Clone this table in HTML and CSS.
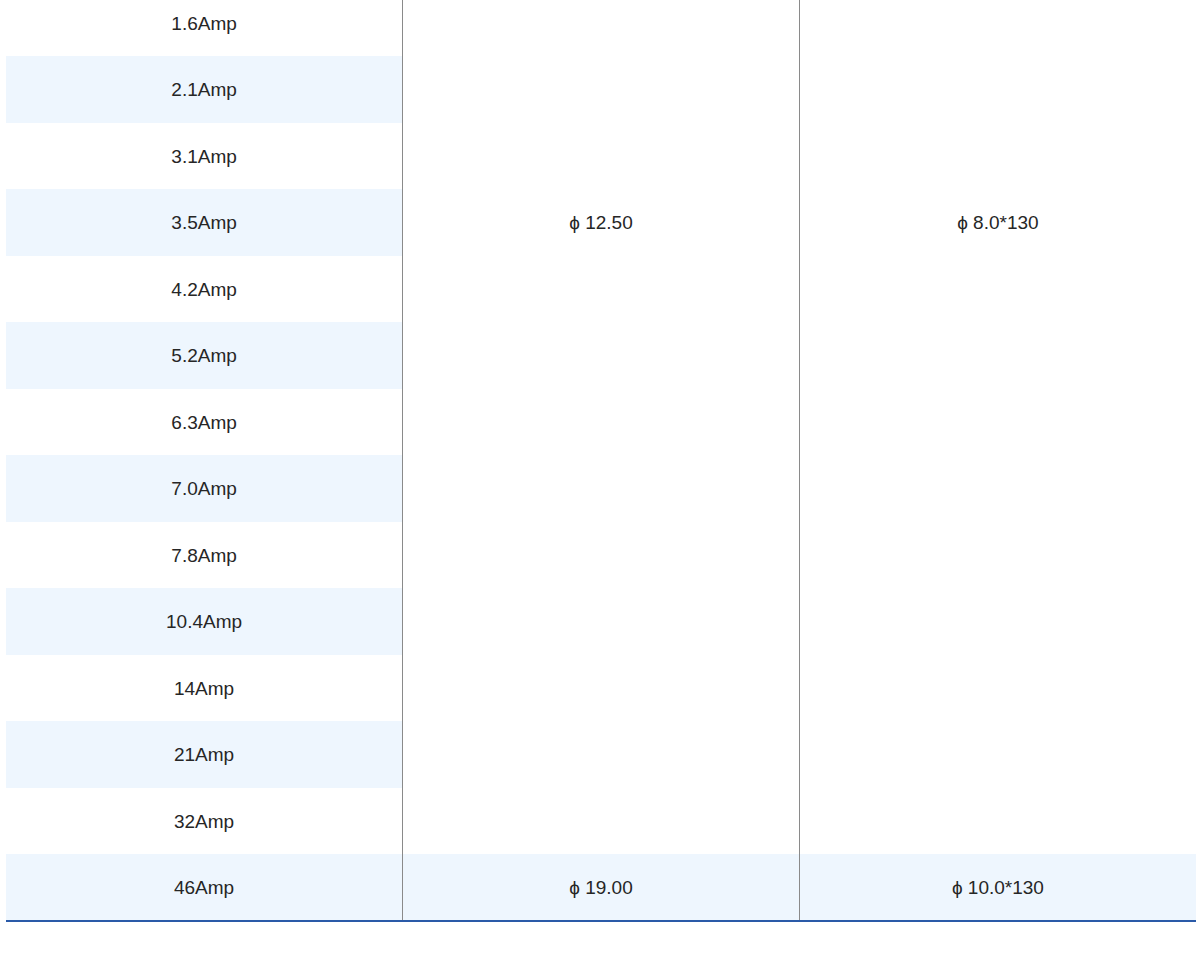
FILE: index.html
```html
<!DOCTYPE html>
<html lang="en">
<head>
    <meta charset="UTF-8">
    <meta name="viewport" content="width=device-width, initial-scale=1.0">
    <title>Current / Size Table</title>
    <link rel="stylesheet" href="styles.css">
</head>
<body>
    <div class="spec-wrap">
        <table class="spec-table">
            <tbody>
                <tr>
                    <td>1.6Amp</td>
                    <td class="merged" rowspan="13">ϕ 12.50</td>
                    <td class="merged" rowspan="13">ϕ 8.0*130</td>
                </tr>
                <tr class="alt"><td>2.1Amp</td></tr>
                <tr><td>3.1Amp</td></tr>
                <tr class="alt"><td>3.5Amp</td></tr>
                <tr><td>4.2Amp</td></tr>
                <tr class="alt"><td>5.2Amp</td></tr>
                <tr><td>6.3Amp</td></tr>
                <tr class="alt"><td>7.0Amp</td></tr>
                <tr><td>7.8Amp</td></tr>
                <tr class="alt"><td>10.4Amp</td></tr>
                <tr><td>14Amp</td></tr>
                <tr class="alt"><td>21Amp</td></tr>
                <tr><td>32Amp</td></tr>
                <tr class="alt last">
                    <td>46Amp</td>
                    <td>ϕ 19.00</td>
                    <td>ϕ 10.0*130</td>
                </tr>
            </tbody>
        </table>
    </div>
</body>
</html>
```

FILE: styles.css
```css
body {
    margin: 0;
    padding: 0;
    background-color: #ffffff;
    color: #262626;
    font-family: "Liberation Sans", Arial, sans-serif;
}
.spec-wrap {
    padding: 0 4px 0 6px;
    margin-top: -10.5px;
}
.spec-table {
    width: 1190px;
    border-collapse: collapse;
    table-layout: fixed;
    border-bottom: 2px solid #2a5aa8;
}
.spec-table td {
    height: 66.5px;
    padding: 2px 0 0;
    text-align: center;
    vertical-align: middle;
    font-size: 19px;
    line-height: 22px;
    box-sizing: border-box;
}
.spec-table td + td,
.spec-table td.merged {
    border-left: 1px solid #8a8a8a;
}
.spec-table tr.alt td {
    background-color: #eef6fe;
}
.spec-table td.merged {
    vertical-align: top;
    padding-top: 222.5px;
    background-color: #ffffff;
}
```
